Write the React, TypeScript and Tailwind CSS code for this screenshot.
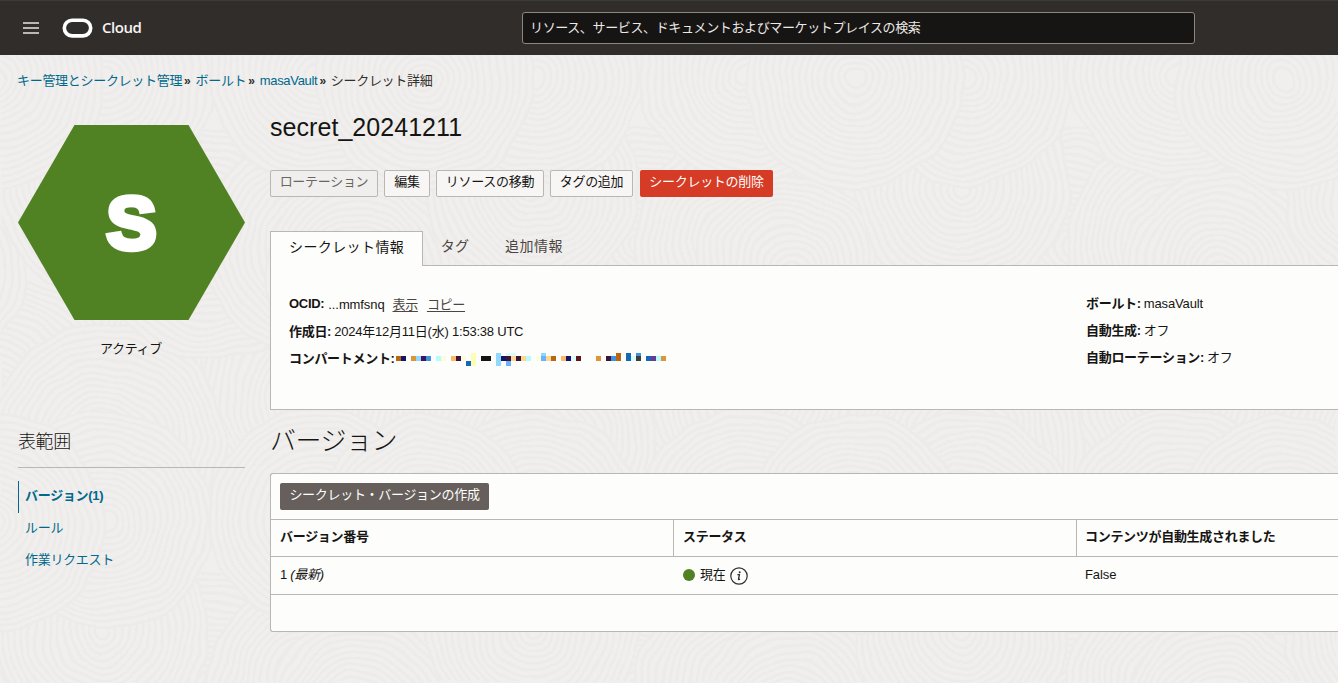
import clsx from "clsx";

const breadcrumbs = ["キー管理とシークレット管理", "ボールト", "masaVault"];

const actions = [
  { label: "ローテーション", className: "w-[108px] text-[#6b6662] bg-[#f1efed]" },
  { label: "編集", className: "w-[46px] bg-[#f7f6f5]" },
  { label: "リソースの移動", className: "w-[108px] bg-[#f7f6f5]" },
  { label: "タグの追加", className: "w-[83px] bg-[#f7f6f5]" },
];

const resources = [
  { label: "バージョン(1)", active: true },
  { label: "ルール", active: false },
  { label: "作業リクエスト", active: false },
];

// [column, y, height, colour]
const redacted: [number, number, number, string][] = [
  [0, 3, 5, "#b86814"], [1, 3, 5, "#141468"], [3, 3, 5, "#e09438"], [4, 3, 5, "#90d8fc"],
  [5, 3, 5, "#3c1464"], [6, 3, 5, "#3c94e0"], [8, 3, 5, "#b4fcfc"], [9, 3, 5, "#fcfcdc"],
  [11, 3, 5, "#fcb868"], [12, 3, 5, "#3c1438"], [13, 3, 5, "#fcfcdc"], [14, 8, 5, "#1468b8"],
  [15, 0, 13, "#fcfcb4"], [17, 3, 5, "#141414"], [18, 3, 5, "#141414"], [20, 0, 13, "#90d8fc"],
  [21, 3, 5, "#141468"], [22, 0, 3, "#dcfcfc"], [22, 3, 5, "#3c1438"], [22, 8, 5, "#68b4fc"],
  [23, 0, 3, "#dcfcfc"], [23, 3, 5, "#fcd890"], [24, 3, 5, "#3c1438"], [25, 3, 5, "#fcd890"],
  [26, 3, 5, "#b4fcfc"], [28, 3, 5, "#fcfcdc"], [29, 0, 3, "#90d8fc"], [29, 3, 5, "#68b4fc"],
  [30, 3, 5, "#fcd890"], [31, 3, 5, "#b86814"], [33, 3, 5, "#fcb868"], [34, 3, 5, "#141468"],
  [35, 3, 5, "#dcfcfc"], [36, 3, 5, "#641414"], [40, 3, 5, "#e09438"], [42, 3, 5, "#3c1438"],
  [43, 3, 5, "#3c94e0"], [44, 0, 8, "#b86814"], [46, 0, 8, "#1468b8"], [47, 3, 5, "#dcfcfc"],
  [48, 0, 3, "#3c94e0"], [48, 3, 5, "#3c3c38"], [50, 3, 5, "#1468b8"], [51, 3, 5, "#643c94"],
  [52, 3, 5, "#b4fcfc"], [53, 3, 5, "#e09438"],
];

const swirls = [
  { x: 225, y: 310, r: 120 },
  { x: 10, y: 340, r: 120 },
  { x: 332, y: 340, r: 115 },
  { x: 120, y: 390, r: 120 },
  { x: 225, y: 190, r: 115 },
  { x: 332, y: 190, r: 112 },
  { x: 375, y: 215, r: 95 },
  { x: 117, y: 133, r: 106 },
  { x: 120, y: 22, r: 108 },
  { x: 332, y: 18, r: 108 },
  { x: 10, y: 25, r: 108 },
];

const Swirl = ({ x, y, r }: { x: number; y: number; r: number }) => (
  <g>
    <circle cx={x} cy={y} r={r} fill="#f0efed" />
    {Array.from({ length: Math.floor(r / 6.5) }, (_, i) => (
      <circle key={i} cx={x} cy={y} r={r - i * 6.5} fill="none" stroke="#ecebe9" strokeWidth="2.4" />
    ))}
  </g>
);

const Texture = () => (
  <svg className="absolute inset-0 h-full w-full" aria-hidden="true">
    <defs>
      <filter id="wobble" x="0" y="0" width="100%" height="100%">
        <feTurbulence type="fractalNoise" baseFrequency="0.02" numOctaves="2" seed="4" />
        <feDisplacementMap in="SourceGraphic" scale="14" xChannelSelector="R" yChannelSelector="G" />
      </filter>
      <pattern id="swirls" width="430" height="444" patternUnits="userSpaceOnUse" x="845" y="55">
        <rect width="430" height="444" fill="#f0efed" />
        {swirls.map((s) =>
          [-430, 0, 430].map((dx) =>
            [-444, 0, 444].map((dy) => <Swirl key={`${s.x}-${s.y}-${dx}-${dy}`} x={s.x + dx} y={s.y + dy} r={s.r} />)
          )
        )}
      </pattern>
    </defs>
    <rect width="100%" height="100%" fill="url(#swirls)" filter="url(#wobble)" />
  </svg>
);

const Header = () => (
  <header className="relative flex h-[55px] shrink-0 items-center border-t border-[#3a3b3d] bg-[#312d2a]">
    <svg className="ml-[23px] h-4 w-4 shrink-0" viewBox="0 0 16 16" stroke="#e8e6e4" strokeWidth="1.5">
      <path d="M0 3h16M0 8h16M0 13h16" />
    </svg>
    <svg className="-mt-px ml-[23px] h-5 w-[31px] shrink-0" viewBox="0 0 31 20">
      <rect x="2.3" y="2.3" width="26.4" height="15.6" rx="7.8" fill="none" stroke="#fff" strokeWidth="3.6" />
    </svg>
    <span className="-mt-0.5 ml-[9px] w-[39px] font-['Open_Sans','Noto_Sans',sans-serif] text-[15px] font-semibold tracking-[-0.45px] text-[#f5f4f2]">
      Cloud
    </span>
    <div className="ml-[381px] flex h-8 w-[673px] items-center rounded-[3px] border border-[#8b8782] bg-[#161513] px-[7px] text-[13px] tracking-[-0.37px] text-[#ece9e6]">
      リソース、サービス、ドキュメントおよびマーケットプレイスの検索
    </div>
  </header>
);

const Breadcrumbs = () => (
  <nav className="flex h-[50px] items-center pl-[17px] pt-px text-[13px] tracking-[-0.3px] text-[#00688c]">
    {breadcrumbs.map((crumb) => (
      <span key={crumb} className="flex items-center">
        <a>{crumb}</a>
        <span className="ml-0.5 mr-[5px] text-[12px] font-bold text-[#312d2a]">»</span>
      </span>
    ))}
    <span className="text-[#312d2a]">シークレット詳細</span>
  </nav>
);

const Sidebar = () => (
  <aside className="flex w-[227px] shrink-0 flex-col">
    <svg className="mt-5 h-[195px] w-[227px]" viewBox="0 0 227 195">
      <path d="M56.5 0H170.500L227 97.500 170.500 195H56.500L0 97.500z" fill="#508223" />
      <text
        x="113.500"
        y="123.500"
        textAnchor="middle"
        fontSize="75"
        fill="#fff"
        stroke="#fff"
        strokeWidth="5.500"
        className="font-['Liberation_Sans',sans-serif] font-bold"
      >
        S
      </text>
    </svg>
    <p className="mt-[19px] pr-px text-center text-[13px] leading-5 tracking-[-0.3px]">アクティブ</p>
    <h2 className="mt-[69px] border-b border-[#bcb6b1] pb-[11px] text-[18px] font-light leading-7 tracking-[-0.4px]">
      表範囲
    </h2>
    <ul className="mt-[13px] text-[13px] tracking-[-0.3px] text-[#00688c]">
      {resources.map((item) => (
        <li
          key={item.label}
          className={clsx(
            "flex h-8 items-center border-l pb-0.5 pl-1.5",
            item.active ? "border-[#00688c] font-bold" : "border-transparent"
          )}
        >
          {item.label}
        </li>
      ))}
    </ul>
  </aside>
);

const Actions = () => (
  <div className="mt-[27px] flex gap-1.5 text-[13px] tracking-[-0.3px]">
    {actions.map((action) => (
      <button
        key={action.label}
        className={clsx(
          "flex h-[27px] items-center justify-center whitespace-nowrap rounded-[2px] border border-[#bcb6b1] pb-[3px]",
          action.className
        )}
      >
        {action.label}
      </button>
    ))}
    <button className="ml-px flex h-[27px] w-[133px] items-center justify-center whitespace-nowrap rounded-[2px] bg-[#d63b25] pb-[3px] text-white">
      シークレットの削除
    </button>
  </div>
);

const Redacted = () => (
  <svg className="mt-px h-[13px] w-[270px]" viewBox="0 0 270 13" shapeRendering="crispEdges">
    {redacted.map(([col, y, h, fill]) => (
      <rect key={`${col}-${y}`} x={col * 5} y={y} width="5" height={h} fill={fill} />
    ))}
  </svg>
);

const SecretInfo = () => (
  <section className="mt-[34px]">
    <div className="flex h-[35px] text-[14px] tracking-[0.2px] text-[#4b4642]">
      <div className="z-10 flex w-[153px] items-center border border-b-0 border-[#bcb6b1] bg-[#fdfdfc] pb-[3px] pl-[18px] tracking-[0.4px] text-[#161513]">
        シークレット情報
      </div>
      <div className="flex w-[64px] items-center justify-center pb-[5px]">タグ</div>
      <div className="ml-[18px] flex items-center pb-[5px] tracking-[0.5px]">追加情報</div>
    </div>
    <div className="-mt-px flex h-[145px] border border-r-0 border-[#bcb6b1] bg-[#fdfdfc] pl-[18px] pt-6 text-[13px] leading-[27px] tracking-[-0.3px]">
      <dl className="w-[797px]">
        <div className="flex">
          <dt className="font-bold tracking-[-0.3px]">OCID:</dt>
          <dd className="ml-1 pt-px tracking-[-0.1px]">...mmfsnq</dd>
          <a className="ml-2 pt-px text-[#4b4642] underline underline-offset-2">表示</a>
          <a className="ml-[9px] pt-px text-[#4b4642] underline underline-offset-2">コピー</a>
        </div>
        <div className="flex">
          <dt className="font-bold">作成日:</dt>
          <dd className="ml-[3px] tracking-[-0.22px]">2024年12月11日(水) 1:53:38 UTC</dd>
        </div>
        <div className="flex items-center">
          <dt className="w-[107px] font-bold">コンパートメント:</dt>
          <dd>
            <Redacted />
          </dd>
        </div>
      </dl>
      <dl>
        <div className="flex gap-[3px]">
          <dt className="font-bold">ボールト:</dt>
          <dd className="tracking-[-0.15px]">masaVault</dd>
        </div>
        <div className="flex gap-[3px]">
          <dt className="font-bold">自動生成:</dt>
          <dd>オフ</dd>
        </div>
        <div className="flex gap-[3px]">
          <dt className="font-bold">自動ローテーション:</dt>
          <dd>オフ</dd>
        </div>
      </dl>
    </div>
  </section>
);

const InfoIcon = () => (
  <svg className="h-[18px] w-[18px]" viewBox="0 0 18 18">
    <circle cx="9" cy="9" r="8.200" fill="none" stroke="#312d2a" strokeWidth="1.2" />
    <path d="M7.400 7.600h2L8.500 12q-.2 1 1.500.2" fill="none" stroke="#312d2a" strokeWidth="1.300" />
    <circle cx="9.700" cy="5.200" r="1" fill="#312d2a" />
  </svg>
);

const Versions = () => (
  <section>
    <h2 className="mt-[11px] text-[26px] font-light leading-10 tracking-[-0.5px]">バージョン</h2>
    <div className="mt-3 h-[159px] rounded-l-[3px] border border-r-0 border-[#bcb6b1] bg-[#fdfdfc] text-[13px] tracking-[-0.3px]">
      <div className="flex h-[46px] items-center border-b border-[#bcb6b1] pl-[9px]">
        <button className="flex h-[27px] w-[209px] items-center justify-center whitespace-nowrap rounded-[2px] bg-[#665f5b] pb-[3px] text-white">
          シークレット・バージョンの作成
        </button>
      </div>
      <div className="grid h-[37px] grid-cols-[403px_403px_1fr] border-b border-[#bcb6b1] font-bold">
        <div className="flex items-center border-r border-[#bcb6b1] pb-[3px] pl-[9px]">バージョン番号</div>
        <div className="flex items-center border-r border-[#bcb6b1] pb-[3px] pl-[9px]">ステータス</div>
        <div className="flex items-center whitespace-nowrap pb-[3px] pl-2">コンテンツが自動生成されました</div>
      </div>
      <div className="grid h-[38px] grid-cols-[403px_403px_1fr] border-b border-[#bcb6b1]">
        <div className="flex items-center pb-0.5 pl-[9px]">
          1&nbsp;<em>(最新)</em>
        </div>
        <div className="flex items-center pb-0.5 pl-[9px]">
          <span className="mr-[5px] h-3 w-3 rounded-full bg-[#508223]" />
          現在
          <span className="ml-[5px] mt-0.5">
            <InfoIcon />
          </span>
        </div>
        <div className="flex items-center pb-0.5 pl-2 tracking-[-0.1px]">False</div>
      </div>
    </div>
  </section>
);

export default function App() {
  return (
    <div className="relative flex h-[683px] w-[1338px] flex-col overflow-hidden bg-[#f0efed] font-['Liberation_Sans','Noto_Sans_CJK_JP',sans-serif] text-[#161513]">
      <Texture />
      <Header />
      <div className="relative">
        <Breadcrumbs />
        <div className="flex pl-[18px]">
          <Sidebar />
          <main className="ml-[25px] min-w-0 flex-1">
            <h1 className="mt-1.5 text-[25px] leading-8 tracking-[0.05px]">secret_20241211</h1>
            <Actions />
            <SecretInfo />
            <Versions />
          </main>
        </div>
      </div>
    </div>
  );
}
